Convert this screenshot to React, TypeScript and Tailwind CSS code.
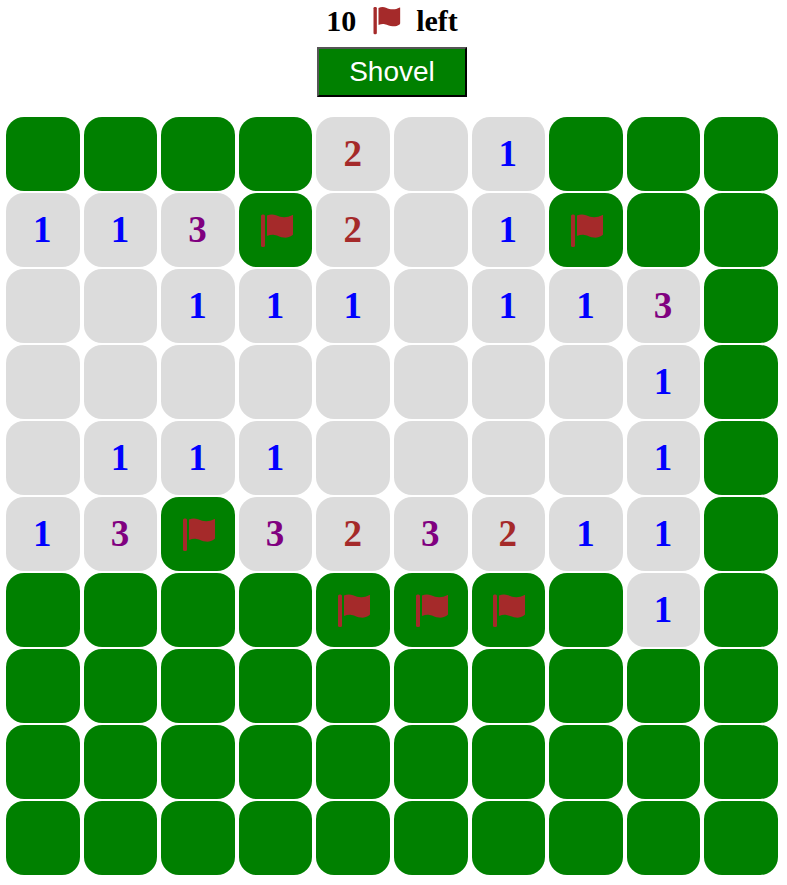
const board = [
  "####2.1###".split(""),
  "113F2.1F##".split(""),
  "..111.113#".split(""),
  "........1#".split(""),
  ".111....1#".split(""),
  "13F323211#".split(""),
  "####FFF#1#".split(""),
  "##########".split(""),
  "##########".split(""),
  "##########".split(""),
];

const numberColors: Record<string, string> = {
  "1": "text-[#0000ff]",
  "2": "text-[#a52a2a]",
  "3": "text-[#800080]",
};

function Flag({ className }: { className: string }) {
  return (
    <svg viewBox="0 0 38 36" className={className} fill="#a52a2a">
      <rect x="4" y="2.500" width="4" height="32.500" rx="1.500" />
      <path d="M10 3.500c3-1.200 6-1.300 9-.3 3 1.100 5.500 2.100 8.500 2 2.500 0 5-.7 8-2.200.4-.2.500 0 .5.3v18.700c0 .6-.2.900-.7 1.300-2.300 1.700-5.300 2.500-8.300 2.300-3.500-.3-6-2-9.500-2.600-2.500-.4-4.800-.1-6.800.8-.4.2-.7 0-.7-.4z" />
    </svg>
  );
}

function Cell({ value }: { value: string }) {
  if (value === "#" || value === "F") {
    return (
      <div className="h-[74px] rounded-[18px] bg-[#008000] flex items-center justify-center">
        {value === "F" && <Flag className="w-[38px] h-[36px]" />}
      </div>
    );
  }
  return (
    <div
      className={`h-[74px] rounded-[18px] bg-[#dcdcdc] flex items-center justify-center font-['Liberation_Serif',serif] font-bold text-[37px] leading-[72px] pr-[1px] ${numberColors[value] ?? ""}`}
    >
      {value === "." ? "" : value}
    </div>
  );
}

export default function App() {
  return (
    <div className="w-[784px] h-[885px] bg-white overflow-hidden">
      <div className="h-[40px] flex items-center justify-center font-['Liberation_Serif',serif] font-bold text-[30px] text-black">
        <span>10</span>
        <Flag className="w-[32px] h-[30px] mx-[14px]" />
        <span>left</span>
      </div>
      <div className="flex justify-center mt-[7px]">
        <button className="w-[150px] h-[50px] bg-[#008000] text-white text-[28px] font-['Liberation_Sans',sans-serif] border-2 border-t-[#555555] border-l-[#555555] border-r-black border-b-black">
          Shovel
        </button>
      </div>
      <div className="mt-[20px] ml-[6px] grid grid-cols-[repeat(10,73.6px)] gap-x-[4px] gap-y-[2px]">
        {board.flatMap((row, r) =>
          row.map((value, c) => <Cell key={`${r}-${c}`} value={value} />)
        )}
      </div>
    </div>
  );
}
